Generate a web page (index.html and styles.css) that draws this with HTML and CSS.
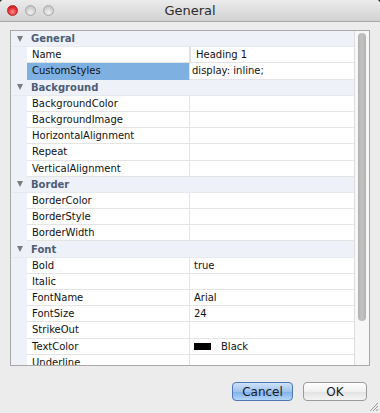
FILE: index.html
```html
<!DOCTYPE html>
<html>
<head>
<meta charset="utf-8">
<link rel="stylesheet" href="styles.css">
</head>
<body>
<div class="window">
  <div class="titlebar">
    <div class="lights">
      <span class="light red"></span>
      <span class="light"></span>
      <span class="light"></span>
    </div>
    <div class="title">General</div>
  </div>
  <div class="content">
    <div class="panel">
      <div class="table">
        <div class="group"><span class="tri"></span><span class="gname">General</span></div>
        <div class="row"><span class="indent"></span><span class="key">Name</span><span class="val val-edit">Heading 1</span></div>
        <div class="row"><span class="indent"></span><span class="key sel">CustomStyles</span><span class="val val-tight">display: inline;</span></div>
        <div class="group"><span class="tri"></span><span class="gname">Background</span></div>
        <div class="row"><span class="indent"></span><span class="key">BackgroundColor</span><span class="val"></span></div>
        <div class="row"><span class="indent"></span><span class="key">BackgroundImage</span><span class="val"></span></div>
        <div class="row"><span class="indent"></span><span class="key">HorizontalAlignment</span><span class="val"></span></div>
        <div class="row"><span class="indent"></span><span class="key">Repeat</span><span class="val"></span></div>
        <div class="row"><span class="indent"></span><span class="key">VerticalAlignment</span><span class="val"></span></div>
        <div class="group"><span class="tri"></span><span class="gname">Border</span></div>
        <div class="row"><span class="indent"></span><span class="key">BorderColor</span><span class="val"></span></div>
        <div class="row"><span class="indent"></span><span class="key">BorderStyle</span><span class="val"></span></div>
        <div class="row"><span class="indent"></span><span class="key">BorderWidth</span><span class="val"></span></div>
        <div class="group"><span class="tri"></span><span class="gname">Font</span></div>
        <div class="row"><span class="indent"></span><span class="key">Bold</span><span class="val">true</span></div>
        <div class="row"><span class="indent"></span><span class="key">Italic</span><span class="val"></span></div>
        <div class="row"><span class="indent"></span><span class="key">FontName</span><span class="val">Arial</span></div>
        <div class="row"><span class="indent"></span><span class="key">FontSize</span><span class="val">24</span></div>
        <div class="row"><span class="indent"></span><span class="key">StrikeOut</span><span class="val"></span></div>
        <div class="row"><span class="indent"></span><span class="key">TextColor</span><span class="val"><span class="swatch"></span>Black</span></div>
        <div class="row"><span class="indent"></span><span class="key">Underline</span><span class="val"></span></div>
      </div>
      <div class="scrollbar"><div class="thumb"></div></div>
    </div>
  </div>
  <div class="buttons">
    <button class="btn btn-default">Cancel</button>
    <button class="btn">OK</button>
  </div>
  <div class="grip">
    <svg width="10" height="10" viewBox="0 0 10 10">
      <path d="M9 1 L1 9 M9 4 L4 9 M9 7 L7 9" stroke="#9a9a9a" stroke-width="1" fill="none"/>
    </svg>
  </div>
</div>
</body>
</html>
```

FILE: styles.css
```css
html, body {
  margin: 0;
  padding: 0;
  background: #2a2a2a;
}
body {
  font-family: "DejaVu Sans", "Liberation Sans", sans-serif;
}
.window {
  position: relative;
  width: 380px;
  height: 413px;
  background: #ececec;
  border-radius: 4px 4px 0 0;
  overflow: hidden;
  display: flex;
  flex-direction: column;
}
.titlebar {
  height: 22px;
  box-sizing: border-box;
  background: linear-gradient(#ebebeb, #d2d2d2);
  border-bottom: 1px solid #a8a8a8;
  display: grid;
  grid-template-columns: 1fr;
  align-items: center;
}
.lights {
  grid-area: 1 / 1;
  display: flex;
  gap: 7px;
  padding-left: 7px;
  align-items: center;
}
.light {
  width: 11px;
  height: 11px;
  border-radius: 50%;
  box-sizing: border-box;
  border: 1px solid #a9a9a9;
  background: radial-gradient(circle at 50% 70%, #f2f2f2, #c9c9c9 70%);
}
.light.red {
  border-color: #b3282a;
  background: radial-gradient(circle at 50% 65%, #ff8f8a, #e1282b 60%, #b51318);
}
.title {
  grid-area: 1 / 1;
  text-align: center;
  font-size: 13px;
  color: #2b2b2b;
  font-family: "DejaVu Sans", sans-serif;
}
.content {
  padding: 8px 10px 0 10px;
}
.panel {
  height: 336px;
  box-sizing: border-box;
  border: 1px solid #a9a9a9;
  background: #fff;
  display: flex;
}
.table {
  flex: 1;
  overflow: hidden;
  font-size: 10px;
}
.group {
  height: 16.2px;
  box-sizing: border-box;
  background: #eef1f7;
  display: flex;
  align-items: center;
  border-bottom: 1px solid #e6e9ef;
}
.tri {
  width: 0;
  height: 0;
  margin-left: 6px;
  margin-right: 8px;
  border-left: 3.5px solid transparent;
  border-right: 3.5px solid transparent;
  border-top: 6px solid #7b7b7b;
}
.gname {
  font-weight: bold;
  color: #4d5c76;
}
.row {
  height: 16.2px;
  display: flex;
  align-items: stretch;
  color: #111;
}
.indent {
  width: 16px;
  background: #eef1f7;
  flex: none;
}
.key {
  width: 163px;
  flex: none;
  box-sizing: border-box;
  padding-left: 5px;
  display: flex;
  align-items: center;
  border-bottom: 1px solid #e4e4e4;
  border-right: 1px solid #e4e4e4;
  white-space: nowrap;
}
.key.sel {
  background: #7fb0e2;
  border-bottom-color: #7fb0e2;
}
.val {
  flex: 1;
  box-sizing: border-box;
  padding-left: 4px;
  display: flex;
  align-items: center;
  border-bottom: 1px solid #e4e4e4;
  white-space: nowrap;
}
.val-edit {
  padding-left: 5px;
  border-left: 1px solid #dcdcdc;
}
.val-tight {
  padding-left: 2px;
}
.swatch {
  display: inline-block;
  width: 17px;
  height: 7px;
  background: #000;
  margin-right: 10px;
}
.scrollbar {
  width: 15px;
  flex: none;
  box-sizing: border-box;
  border-left: 1px solid #dedede;
  background: #f7f7f7;
  padding: 2px 3px 0 3px;
}
.thumb {
  width: 8px;
  height: 288px;
  border-radius: 4px;
  background: linear-gradient(90deg, #b2b2b2, #c2c2c2 50%, #b2b2b2);
}
.buttons {
  display: flex;
  justify-content: flex-end;
  gap: 10px;
  padding: 16px 13px 0 0;
}
.btn {
  height: 19px;
  box-sizing: border-box;
  border-radius: 4px;
  font-family: "DejaVu Sans", sans-serif;
  font-size: 12px;
  color: #1a1a1a;
  padding: 0;
  line-height: 16px;
  border: 1px solid #9a9a9a;
  background: linear-gradient(#ffffff, #f0f0f0 50%, #e2e2e2 51%, #f4f4f4);
  width: 64px;
}
.btn-default {
  width: 61px;
  border-color: #4f77b4;
  background: linear-gradient(#cfe2f8, #9ec3ee 50%, #7eaee8 51%, #b3d6fb);
}
.grip {
  position: absolute;
  right: 1px;
  bottom: 1px;
  width: 10px;
  height: 10px;
}
.grip svg {
  display: block;
}
```
